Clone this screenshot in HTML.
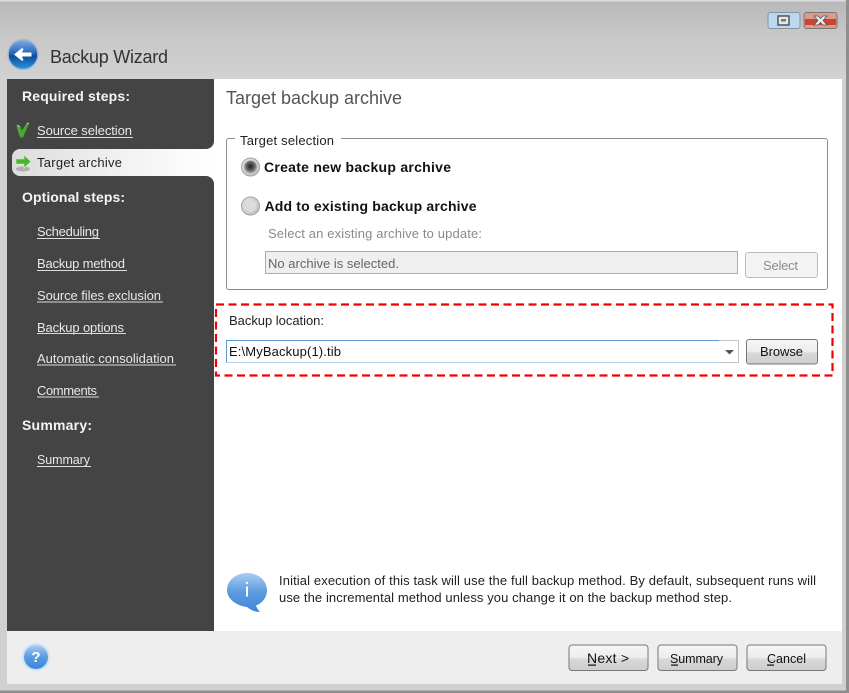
<!DOCTYPE html>
<html><head><meta charset="utf-8"><title>Backup Wizard</title>
<style>
html,body{margin:0;padding:0;background:#d0d0d0;overflow:hidden}
svg{display:block;font-family:"Liberation Sans","DejaVu Sans",sans-serif;filter:blur(.3px)}
.l{fill:#e8e8e8;font-size:13px}
.h{fill:#f4f4f4;font-size:14px;font-weight:bold}
.t{fill:#222;font-size:13px}
.b{fill:#111;font-size:14px;font-weight:bold}
.g{fill:#8a8a8a;font-size:13px}
</style></head><body>
<svg width="849" height="693" viewBox="0 0 849 693" xmlns="http://www.w3.org/2000/svg">
<defs>
<linearGradient id="top" x1="0" y1="0" x2="0" y2="1"><stop offset="0" stop-color="#b8b8b8"/><stop offset=".45" stop-color="#c8c8c8"/><stop offset="1" stop-color="#d2d2d2"/></linearGradient>
<linearGradient id="sel" x1="0" y1="0" x2="1" y2="0"><stop offset="0" stop-color="#dcdcdc"/><stop offset=".5" stop-color="#f0f0f0"/><stop offset="1" stop-color="#ffffff"/></linearGradient>
<linearGradient id="btn" x1="0" y1="0" x2="0" y2="1"><stop offset="0" stop-color="#f6f6f6"/><stop offset=".5" stop-color="#ececec"/><stop offset=".55" stop-color="#d8d8d8"/><stop offset="1" stop-color="#cdcdcd"/></linearGradient>
<linearGradient id="blue" x1="0" y1="0" x2="0" y2="1"><stop offset="0" stop-color="#a9cdf2"/><stop offset=".5" stop-color="#5a9be0"/><stop offset="1" stop-color="#3f86d8"/></linearGradient>
<linearGradient id="back" x1="0" y1="0" x2="0" y2="1"><stop offset="0" stop-color="#7fb0e4"/><stop offset=".5" stop-color="#1f5fb8"/><stop offset=".55" stop-color="#0b4a9e"/><stop offset="1" stop-color="#2a9ae0"/></linearGradient>
<radialGradient id="rad" cx=".5" cy=".45" r=".55"><stop offset="0" stop-color="#222"/><stop offset=".6" stop-color="#666"/><stop offset="1" stop-color="#bbb"/></radialGradient>
<linearGradient id="rad2" x1="0" y1="0" x2="1" y2="1"><stop offset="0" stop-color="#e4e4e4"/><stop offset="1" stop-color="#bdbdbd"/></linearGradient>
</defs>

<!-- window frame -->
<rect width="849" height="693" fill="#d0d0d0"/>
<rect width="849" height="79" fill="url(#top)"/>
<rect y="0" width="849" height="1.500" fill="#dcdcdc"/>
<rect x="846" y="0" width="3" height="693" fill="#8e8e8e"/>
<rect x="0" y="690.500" width="849" height="2.500" fill="#8e8e8e"/>

<!-- title bar buttons -->
<rect x="768" y="12.500" width="32" height="16" rx="2.500" fill="#bcd7f0" stroke="#8695a6"/>
<rect x="778" y="16" width="11" height="9" fill="#e8e8e8" stroke="#555" stroke-width="1.500"/>
<rect x="781" y="19" width="5" height="2.500" fill="#777"/>
<rect x="804" y="12.500" width="33" height="16" rx="2.500" fill="#e09a8d" stroke="#777"/>
<rect x="805" y="19" width="31" height="6" fill="#c8452f"/>
<path d="M814 16h4l2.500 2.500 2.500-2.500h4l-4 4.500 4 4.500h-4l-2.500-2.500-2.500 2.500h-4l4-4.500z" fill="#eee" stroke="#555" stroke-width=".8"/>

<!-- back button -->
<circle cx="23" cy="54.500" r="15" fill="url(#back)" stroke="#a8bbce" stroke-width="1.500"/>
<path d="M14 54.500l8-6.500 1.500 1-1.500 3.500h9.500v4h-9.500l1.500 3.500-1.500 1z" fill="#fff"/>
<text x="50" y="63" font-size="18" fill="#333" textLength="118" lengthAdjust="spacing">Backup Wizard</text>

<!-- content -->
<rect x="214" y="79" width="628" height="552" fill="#fff"/>
<rect x="7" y="631" width="835" height="53" fill="#eee"/>
<rect x="7" y="79" width="207" height="552" fill="#444"/>
<!-- selected tab -->
<rect x="204" y="140" width="10" height="46" fill="#fff"/>
<path d="M7 79H214V141a8 8 0 0 1-8 8H20a8 8 0 0 0-8 8v11a8 8 0 0 0 8 8H206a8 8 0 0 1 8 8V631H7z" fill="#444"/>
<path d="M20 149H214V176H20a8 8 0 0 1-8-8v-11a8 8 0 0 1 8-8z" fill="url(#sel)"/>

<!-- sidebar text -->
<text class="h" x="22" y="101" textLength="108" lengthAdjust="spacing">Required steps:</text>
<path d="M16.500 126.500l3 -1 2.500 5 5-8 2 1-6 14h-3z" fill="#49a82e"/>
<path d="M17 125l3 2M27 123l2 1" stroke="#ccc"/>
<text class="l" x="37" y="135" textLength="95" lengthAdjust="spacing">Source selection</text>
<rect x="37" y="137" width="96" height="1" fill="#ddd"/>

<ellipse cx="23" cy="169" rx="7" ry="2.500" fill="#b0b0b0"/>
<path d="M16 159h8v-4l7 6.500-7 6.500v-4h-8z" fill="#4cb52f" stroke="#d8e8c8" stroke-width=".6"/>
<text class="t" x="37" y="167" textLength="85" lengthAdjust="spacing">Target archive</text>

<text class="h" x="22" y="202" textLength="103" lengthAdjust="spacing">Optional steps:</text>
<text class="l" x="37" y="236" textLength="62" lengthAdjust="spacing">Scheduling</text>
<rect x="37" y="238" width="63" height="1" fill="#ddd"/>
<text class="l" x="37" y="268" textLength="88" lengthAdjust="spacing">Backup method</text>
<rect x="37" y="270" width="90" height="1" fill="#ddd"/>
<text class="l" x="37" y="300" textLength="124" lengthAdjust="spacing">Source files exclusion</text>
<rect x="37" y="301.500" width="126" height="1" fill="#ddd"/>
<text class="l" x="37" y="332" textLength="87" lengthAdjust="spacing">Backup options</text>
<rect x="37" y="333" width="89" height="1" fill="#ddd"/>
<text class="l" x="37" y="363" textLength="137" lengthAdjust="spacing">Automatic consolidation</text>
<rect x="37" y="364.500" width="139" height="1" fill="#ddd"/>
<text class="l" x="37" y="395" textLength="60" lengthAdjust="spacing">Comments</text>
<rect x="37" y="396.500" width="62" height="1" fill="#ddd"/>
<text class="h" x="22" y="430" textLength="70" lengthAdjust="spacing">Summary:</text>
<text class="l" x="37" y="464" font-size="12.500" style="font-size:12.500px" textLength="53" lengthAdjust="spacing">Summary</text>
<rect x="37" y="466" width="54" height="1" fill="#ddd"/>

<!-- main heading -->
<text x="226" y="104" font-size="18" fill="#555" textLength="176" lengthAdjust="spacing">Target backup archive</text>

<!-- group box -->
<path d="M235 138.500H229a2.500 2.500 0 0 0-2.500 2.500V287a2.500 2.500 0 0 0 2.500 2.500H825a2.500 2.500 0 0 0 2.500-2.500V141a2.500 2.500 0 0 0-2.500-2.500H341" fill="none" stroke="#8c8c8c"/>
<text class="t" x="240" y="145" textLength="94" lengthAdjust="spacing">Target selection</text>

<!-- radios -->
<circle cx="250.500" cy="167" r="9" fill="url(#rad2)" stroke="#a0a0a0"/>
<circle cx="250.500" cy="167" r="6.500" fill="url(#rad)"/>
<text class="b" x="264" y="172" textLength="187" lengthAdjust="spacing">Create new backup archive</text>
<circle cx="250.500" cy="206" r="9" fill="url(#rad2)" stroke="#a0a0a0"/>
<circle cx="250.500" cy="206" r="6" fill="#dcdcdc"/>
<text class="b" x="264.500" y="211" textLength="212" lengthAdjust="spacing">Add to existing backup archive</text>
<text class="g" x="268" y="238" textLength="214" lengthAdjust="spacing">Select an existing archive to update:</text>

<rect x="265.500" y="251.500" width="472" height="22" fill="#efefef" stroke="#acacac"/>
<text x="268" y="268" font-size="13" fill="#666" textLength="131" lengthAdjust="spacing">No archive is selected.</text>

<rect x="745.500" y="252.500" width="72" height="25" rx="2.500" fill="#f3f3f3" stroke="#bcbcbc"/>
<text x="763" y="270" font-size="13" fill="#8c8c8c" textLength="35" lengthAdjust="spacing">Select</text>

<!-- red dashed -->
<rect x="216" y="304.500" width="616.500" height="71" fill="none" stroke="#f00000" stroke-width="2.200" stroke-dasharray="8 4.500"/>
<text class="t" x="229" y="325" textLength="95" lengthAdjust="spacing">Backup location:</text>

<!-- combo -->
<rect x="226.500" y="340.500" width="512" height="22" fill="#fff" stroke="#c4c4c4"/>
<path d="M226.500 362.500V340.500H719" fill="none" stroke="#5c9bd1"/>
<path d="M226.500 362.500H719" fill="none" stroke="#b6d3ee"/>
<path d="M725 350h9l-4.500 4.500z" fill="#555"/>
<text x="229" y="356" font-size="13" fill="#111" textLength="112" lengthAdjust="spacing">E:\MyBackup(1).tib</text>

<rect x="746.500" y="339.500" width="71" height="24.500" rx="2.500" fill="url(#btn)" stroke="#777"/>
<text x="760" y="356" font-size="13" fill="#111" textLength="43" lengthAdjust="spacing">Browse</text>

<!-- info -->
<path d="M247 573c11 0 20 7.500 20 17 0 8-5.500 13.500-11 15.500 .5 2 2 4.500 4 6.500-5.500 0-10-2.500-13-5-9.500-1-20-7.500-20-17 0-9.500 9-17 20-17z" fill="url(#blue)"/>
<circle cx="247" cy="583" r="1.200" fill="#fff"/>
<rect x="246" y="586.500" width="2" height="10" fill="#fff"/>
<text x="279" y="585" font-size="13" fill="#222" textLength="537" lengthAdjust="spacing">Initial execution of this task will use the full backup method. By default, subsequent runs will</text>
<text x="279" y="602" font-size="13" fill="#222" textLength="453" lengthAdjust="spacing">use the incremental method unless you change it on the backup method step.</text>

<!-- footer -->
<circle cx="36" cy="657" r="14" fill="#cfe3f7"/>
<circle cx="36" cy="657" r="12" fill="url(#blue)"/>
<text x="36" y="662" font-size="15" font-weight="bold" fill="#fff" text-anchor="middle">?</text>

<rect x="569" y="645" width="79" height="25.500" rx="3" fill="url(#btn)" stroke="#777"/>
<text x="587" y="663" font-size="14" fill="#111" textLength="42" lengthAdjust="spacing">Next &gt;</text>
<rect x="588" y="664.500" width="8" height="1.200" fill="#111"/>
<rect x="658" y="645" width="79" height="25.500" rx="3" fill="url(#btn)" stroke="#777"/>
<text x="670" y="663" font-size="12.500" fill="#111" textLength="53" lengthAdjust="spacing">Summary</text>
<rect x="671" y="664.500" width="7" height="1.200" fill="#111"/>
<rect x="747" y="645" width="79" height="25.500" rx="3" fill="url(#btn)" stroke="#777"/>
<text x="767" y="663" font-size="12.500" fill="#111" textLength="39" lengthAdjust="spacing">Cancel</text>
<rect x="767" y="664.500" width="7" height="1.200" fill="#111"/>
</svg>
</body></html>
